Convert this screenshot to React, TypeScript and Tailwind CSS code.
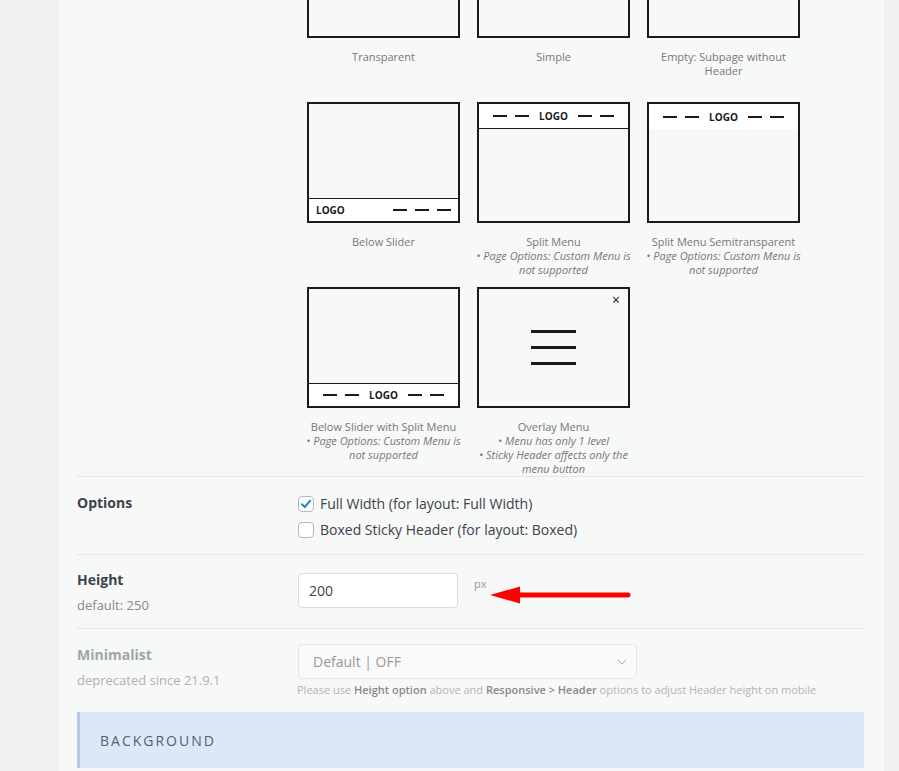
import React from 'react';
import { ChevronDown } from 'lucide-react';

type Bar = 'none' | 'top-split' | 'top-split-semi' | 'bottom' | 'bottom-split' | 'overlay';

interface Layout {
  title: string;
  notes?: string[];
  bar: Bar;
}

// first row is scrolled out of view, only the bottom of those boxes shows
const layouts: Layout[] = [
  { title: 'Transparent', bar: 'none' },
  { title: 'Simple', bar: 'none' },
  { title: 'Empty: Subpage without Header', bar: 'none' },
  { title: 'Below Slider', bar: 'bottom' },
  { title: 'Split Menu', notes: ['• Page Options: Custom Menu is not supported'], bar: 'top-split' },
  { title: 'Split Menu Semitransparent', notes: ['• Page Options: Custom Menu is not supported'], bar: 'top-split-semi' },
  { title: 'Below Slider with Split Menu', notes: ['• Page Options: Custom Menu is not supported'], bar: 'bottom-split' },
  { title: 'Overlay Menu', notes: ['• Menu has only 1 level', '• Sticky Header affects only the menu button'], bar: 'overlay' },
];

const Dash = () => <span className="block w-[14px] h-[2px] bg-[#1a1a1a]" />;
const Logo = () => <span className="text-[10px] font-bold leading-none text-[#1a1a1a] mx-[2px]">LOGO</span>;

function SplitRow() {
  return (
    <div className="flex items-center justify-center gap-[8px]">
      <Dash />
      <Dash />
      <Logo />
      <Dash />
      <Dash />
    </div>
  );
}

function SideRow() {
  return (
    <div className="flex items-center justify-between px-[7px]">
      <span className="text-[10px] font-bold leading-none text-[#1a1a1a]">LOGO</span>
      <div className="flex items-center gap-[8px]">
        <Dash />
        <Dash />
        <Dash />
      </div>
    </div>
  );
}

function Thumb({ bar }: { bar: Bar }) {
  return (
    <div className="relative w-[153px] h-[121px] border-2 border-[#1a1a1a] bg-[#f7f8f8] flex flex-col">
      {bar === 'top-split' && (
        <div className="h-[25px] bg-white border-b border-[#1a1a1a] flex items-center justify-center">
          <SplitRow />
        </div>
      )}
      {bar === 'top-split-semi' && (
        <div className="h-[25px] bg-white flex items-center justify-center">
          <SplitRow />
        </div>
      )}
      {bar === 'bottom' && (
        <div className="mt-auto h-[23px] bg-white border-t border-[#1a1a1a] flex flex-col justify-center">
          <SideRow />
        </div>
      )}
      {bar === 'bottom-split' && (
        <div className="mt-auto h-[23px] bg-white border-t border-[#1a1a1a] flex items-center justify-center">
          <SplitRow />
        </div>
      )}
      {bar === 'overlay' && (
        <>
          <span className="absolute top-[4px] right-[8px] text-[14px] leading-none text-[#1a1a1a]">×</span>
          <div className="m-auto flex flex-col gap-[13px]">
            <span className="block w-[45px] h-[3px] bg-[#1a1a1a]" />
            <span className="block w-[45px] h-[3px] bg-[#1a1a1a]" />
            <span className="block w-[45px] h-[3px] bg-[#1a1a1a]" />
          </div>
        </>
      )}
    </div>
  );
}

function Checkbox({ checked }: { checked?: boolean }) {
  return (
    <span className="w-[16px] h-[16px] rounded-[4px] border border-[#b4b9be] bg-white flex items-center justify-center shrink-0">
      {checked && (
        <svg width="12" height="12" viewBox="0 0 12 12">
          <path d="M2 6.3 L4.8 9 L10.2 2.6" fill="none" stroke="#1e8cbe" strokeWidth="2" strokeLinecap="round" strokeLinejoin="round" />
        </svg>
      )}
    </span>
  );
}

export default function App() {
  return (
    <div className="h-[771px] overflow-hidden bg-[#f1f1f1] flex font-['Open_Sans',sans-serif]">
      <div className="w-[57px] shrink-0" />
      <main className="w-[827px] shrink-0 bg-[#f7f8f8] border-l border-[#ececec] pl-[19px] pr-[20px]">
        {/* header layout thumbnails, page is scrolled */}
        <div className="-mt-[83px] pl-[230px]">
          <div className="grid grid-cols-[153px_153px_153px] gap-x-[17px]">
            {layouts.map((l) => (
              <div key={l.title} className="min-h-[185px]">
                <Thumb bar={l.bar} />
                <div className="mt-[12px] -mx-[2px] text-center text-[11px] leading-[14px] text-[#777]">
                  <div>{l.title}</div>
                  {l.notes?.map((n) => (
                    <div key={n} className="italic">{n}</div>
                  ))}
                </div>
              </div>
            ))}
          </div>
        </div>

        {/* options */}
        <div className="flex border-t border-[#e6e7e8] pt-[18px] pb-[16px]">
          <div className="w-[221px] shrink-0 text-[14px] font-bold leading-[16px] text-[#3c434a]">Options</div>
          <div className="flex flex-col gap-[9px] text-[14px] text-[#3c434a]">
            <label className="flex items-center gap-[6px] h-[17px]">
              <Checkbox checked />
              Full Width (for layout: Full Width)
            </label>
            <label className="flex items-center gap-[6px] h-[17px]">
              <Checkbox />
              Boxed Sticky Header (for layout: Boxed)
            </label>
          </div>
        </div>

        {/* height */}
        <div className="flex border-t border-[#e6e7e8] pt-[18px] pb-[15px]">
          <div className="w-[221px] shrink-0">
            <div className="-mt-px text-[14px] font-bold leading-[16px] text-[#3c434a]">Height</div>
            <div className="mt-[9px] text-[13px] leading-[16px] text-[#888]">default: 250</div>
          </div>
          <div className="flex items-start">
            <input
              defaultValue="200"
              className="w-[160px] h-[35px] rounded-[4px] border border-[#dcdcde] bg-white px-[10px] text-[14px] text-[#3c434a] outline-none"
            />
            <span className="ml-[16px] mt-[3px] text-[11px] text-[#999]">px</span>
            <svg width="144" height="22" viewBox="0 0 144 22" className="ml-[2px] mt-[11px]">
              <path d="M1 11 L31 2.5 L31 19.5 Z" fill="#f00" />
              <line x1="30" y1="11" x2="139" y2="11" stroke="#f00" strokeWidth="5" strokeLinecap="round" />
            </svg>
          </div>
        </div>

        {/* minimalist */}
        <div className="flex border-t border-[#e6e7e8] pt-[15px] pb-[15px]">
          <div className="w-[221px] shrink-0">
            <div className="mt-[3px] text-[14px] font-bold leading-[16px] text-[#a0a5aa]">Minimalist</div>
            <div className="mt-[9px] text-[13px] leading-[16px] text-[#b0b0b0]">deprecated since 21.9.1</div>
          </div>
          <div>
            <div className="w-[339px] h-[35px] rounded-[4px] border border-[#e4e5e6] bg-[#fafafa] pl-[14px] pr-[6px] flex items-center justify-between">
              <span className="text-[14px] text-[#999]">Default | OFF</span>
              <ChevronDown size={16} strokeWidth={1.5} className="text-[#aaa]" />
            </div>
            <div className="mt-[4px] -ml-px text-[11px] leading-[14px] text-[#b3b3b3] whitespace-nowrap">
              Please use <span className="font-semibold text-[#888]">Height option</span> above and{' '}
              <span className="font-semibold text-[#888]">Responsive &gt; Header</span> options to adjust Header height on mobile
            </div>
          </div>
        </div>

        {/* background section */}
        <div className="h-[56px] bg-[#dce8f7] border-l-[3px] border-[#b5c9e6] pl-[20px] flex items-center">
          <span className="text-[14px] tracking-[2px] text-[#516070]">BACKGROUND</span>
        </div>
      </main>
    </div>
  );
}
